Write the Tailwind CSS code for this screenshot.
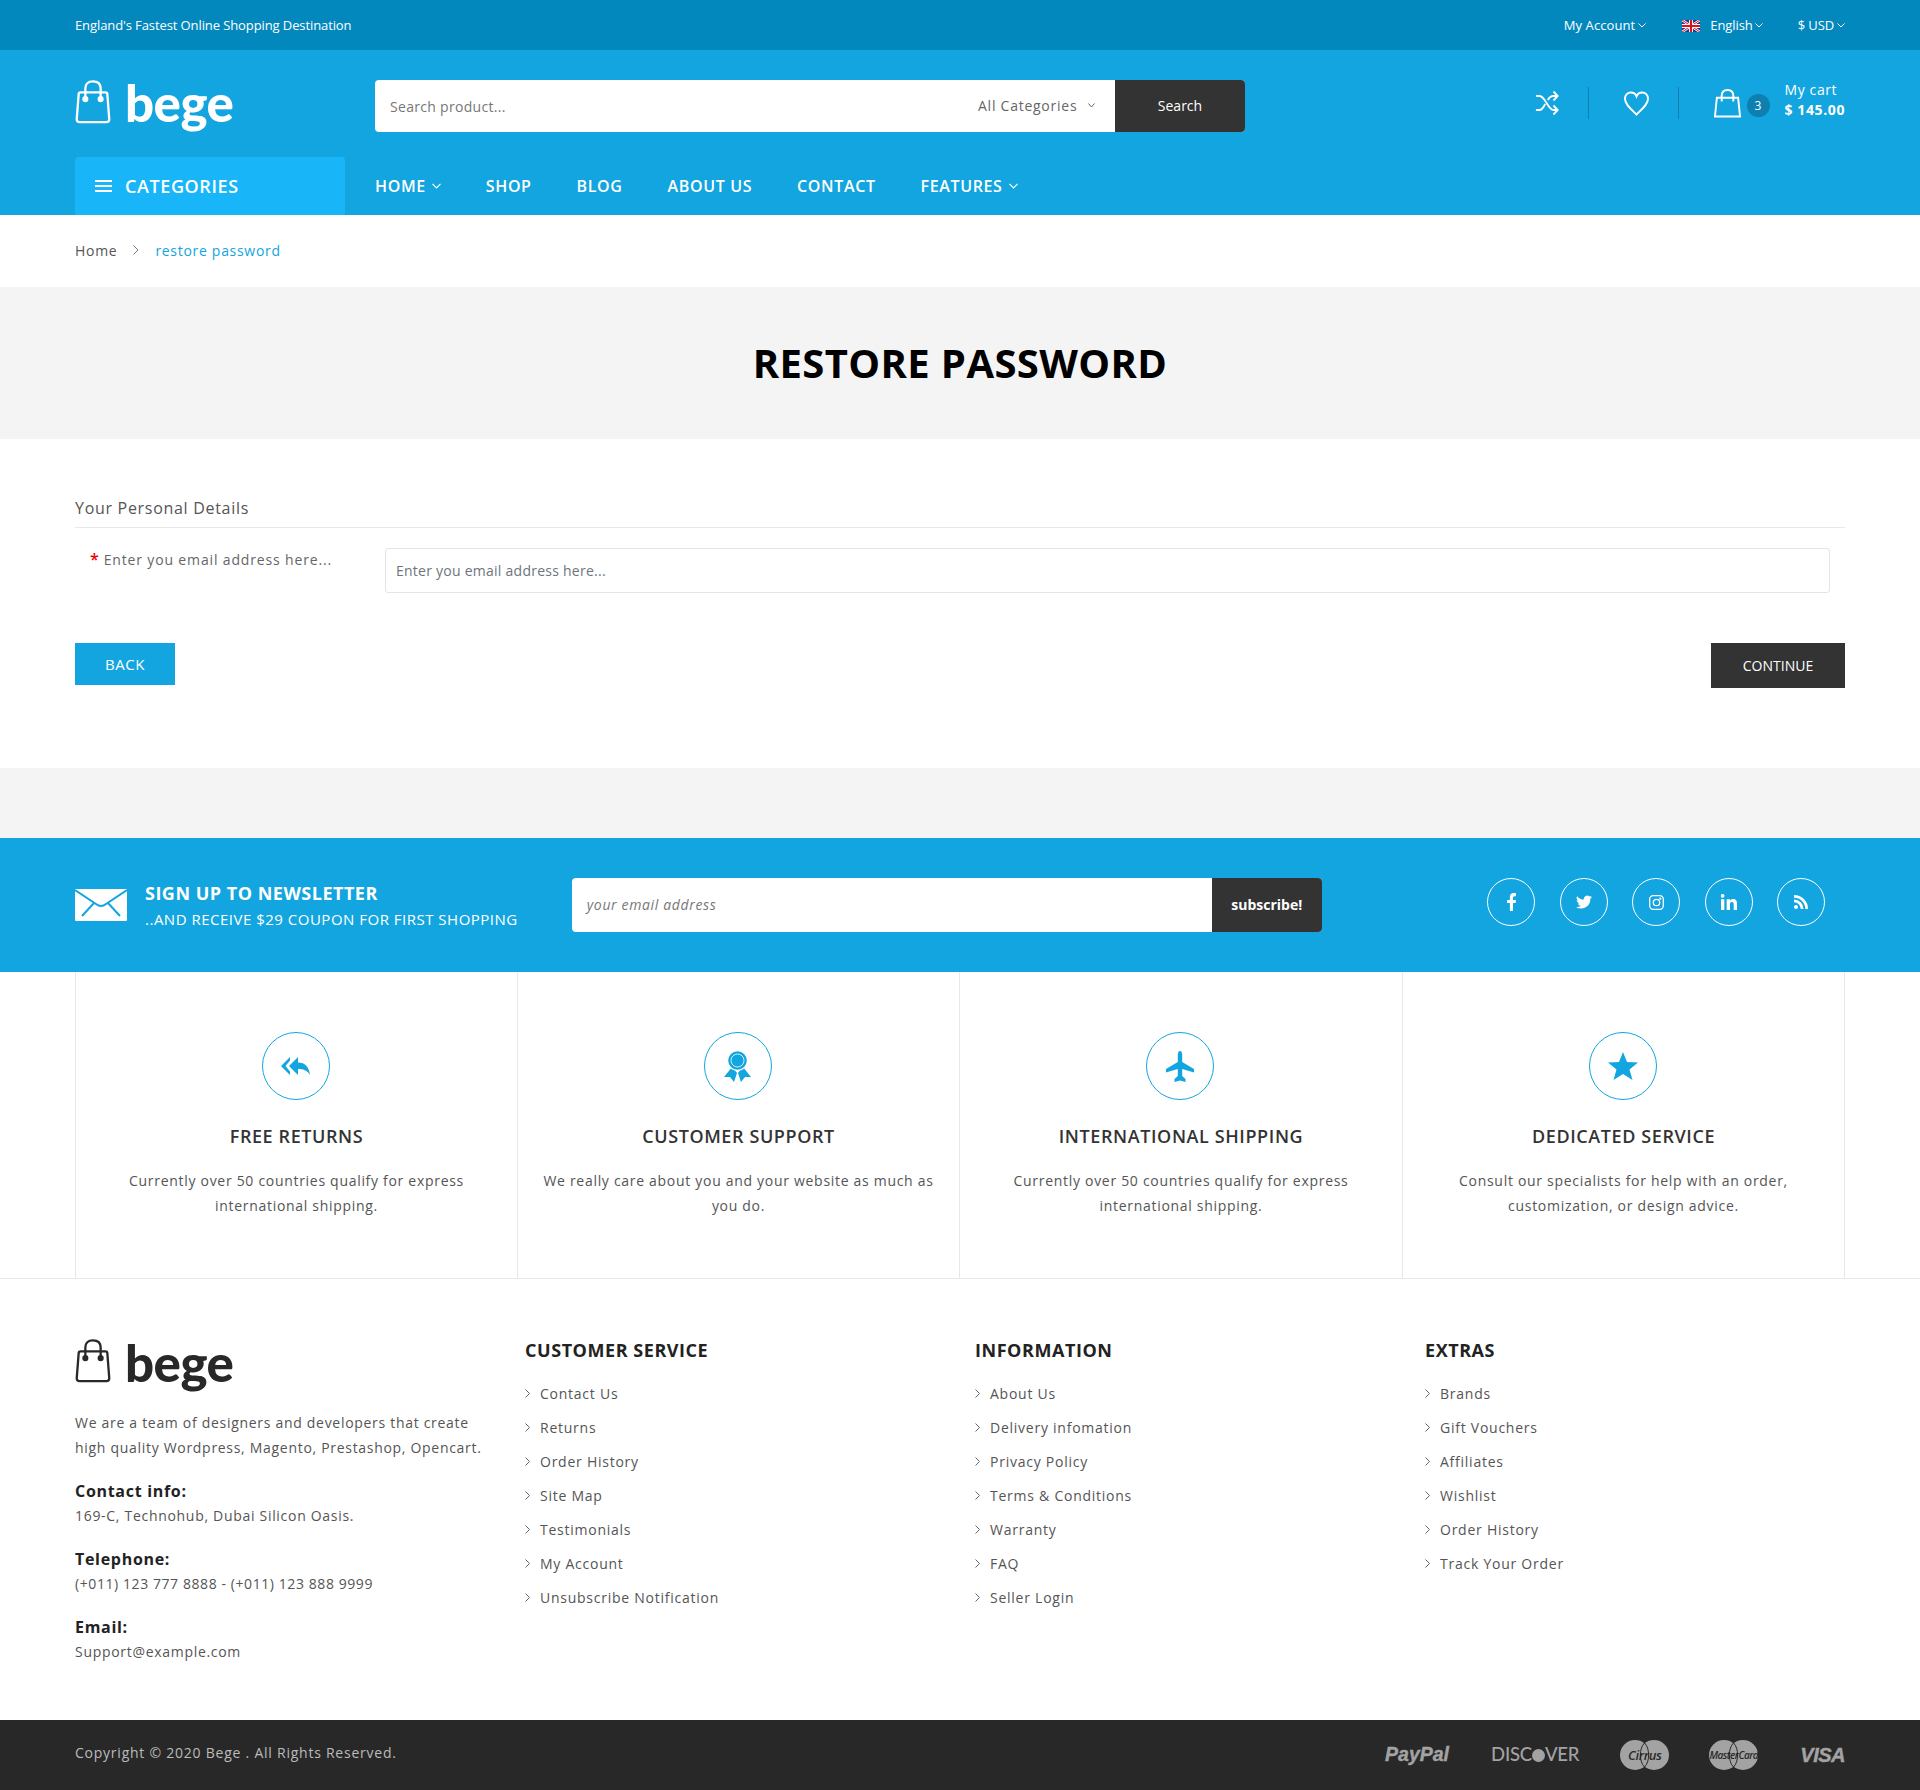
<!DOCTYPE html>
<html lang="en">
<head>
<meta charset="UTF-8">
<title>Bege - Restore Password</title>
<script src="https://cdn.jsdelivr.net/npm/@tailwindcss/browser@4"></script>
</head>
<body class="bg-white font-['Open_Sans',sans-serif] text-[14px] text-[#555]">

<!-- Top bar -->
<div class="h-[50px] bg-[#0388bd] text-white text-[13px] tracking-[-0.1px]">
  <div class="mx-[75px] h-full pt-[1px] flex justify-between items-center">
    <span>England's Fastest Online Shopping Destination</span>
    <div class="flex items-center">
      <span class="flex items-center gap-[3px] tracking-[0.1px]">My Account <svg class="w-[8px] h-[5px]" viewBox="0 0 8 5" fill="none" stroke="#fff"><path d="M.5.5 4 4 7.5.5"/></svg></span>
      <svg class="w-[18px] h-[12px] ml-[36px] mr-[10px]" viewBox="0 0 18 12"><rect width="18" height="12" fill="#1f3a8a"/><path d="M0 0 18 12M18 0 0 12" stroke="#fff" stroke-width="2.4"/><path d="M0 0 18 12M18 0 0 12" stroke="#d8121f" stroke-width="1"/><path d="M9 0V12M0 6H18" stroke="#fff" stroke-width="4"/><path d="M9 0V12M0 6H18" stroke="#d8121f" stroke-width="2.2"/></svg>
      <span class="flex items-center gap-[2px]">English <svg class="w-[8px] h-[5px]" viewBox="0 0 8 5" fill="none" stroke="#fff"><path d="M.5.5 4 4 7.5.5"/></svg></span>
      <span class="flex items-center gap-[3px] ml-[35px]">$ USD <svg class="w-[8px] h-[5px]" viewBox="0 0 8 5" fill="none" stroke="#fff"><path d="M.5.5 4 4 7.5.5"/></svg></span>
    </div>
  </div>
</div>

<!-- Header -->
<header class="h-[165px] bg-[#13a5df] text-white">
  <div class="mx-[75px] h-[107px] flex items-start">
    <div class="w-[300px] pt-[30px] flex items-start gap-[14px]">
      <svg class="w-[36px] h-[44px]" viewBox="0 0 36 46" fill="none" stroke="#fff" stroke-width="2.4"><path d="M5 13H31Q33 13 33 15L35 41Q35 44 32 44H4Q1 44 1 41L3 15Q3 13 5 13Z"/><path d="M10 19V9Q10 1.500 18 1.500T26 9V19"/><circle cx="10" cy="20" r="2" fill="#fff"/><circle cx="26" cy="20" r="2" fill="#fff"/></svg>
      <span class="font-['Lato',sans-serif] font-black text-[51px] leading-[50px] tracking-[-0.5px] mt-[-2px]">bege</span>
    </div>
    <div class="mt-[30px] w-[870px] h-[52px] flex rounded-[4px] overflow-hidden bg-white text-[#666]">
      <span class="flex-1 pl-[15px] pt-[1px] leading-[52px] tracking-[0.3px] text-[#777]">Search product...</span>
      <span class="w-[137px] flex items-center tracking-[0.75px] gap-[11px] pb-[2px]">All Categories <svg class="w-[7px] h-[5px]" viewBox="0 0 7 5" fill="none" stroke="#666"><path d="M.5.500 3.500 4 6.500.5"/></svg></span>
      <span class="w-[130px] bg-[#333] text-white text-center leading-[52px]">Search</span>
    </div>
    <div class="ml-auto mt-[29px] flex items-center h-[48px]">
      <svg class="w-[24px] h-[26px] mr-[29px]" viewBox="0 0 26 26" preserveAspectRatio="none" fill="none" stroke="#fff" stroke-width="2"><path d="M1 6H5C11 6 14 20 20 20H24M1 20H5C8 20 10 16 11 14M14 10C15 8 17 6 20 6H24M20 1.500 24.500 6 20 10.500M20 15.500 24.500 20 20 24.500"/></svg>
      <div class="w-px h-[32px] bg-[#0d7fb0]"></div>
      <svg class="ml-[34px] mr-[28px] w-[27px] h-[25px]" viewBox="0 0 27 26" fill="none" stroke="#fff" stroke-width="2"><path d="M13.500 24.500C8 19 1.500 14 1.500 8C1.500 4 4.500 1.500 7.500 1.500C10 1.500 12.500 3 13.500 5.500C14.500 3 17 1.500 19.500 1.500C22.500 1.500 25.500 4 25.500 8C25.500 14 19 19 13.500 24.500Z"/></svg>
      <div class="w-px h-[32px] bg-[#0d7fb0]"></div>
      <svg class="ml-[35px] w-[27px] h-[29px]" viewBox="0 0 28 30" fill="none" stroke="#fff" stroke-width="2"><path d="M3 9H25L27 28.500H1Z"/><path d="M8 13V7Q8 1 14 1T20 7V13"/></svg>
      <span class="ml-[6px] mt-[5px] w-[23px] h-[23px] rounded-full bg-[#0d7fb0] text-center text-[12px] leading-[23px]">3</span>
      <div class="ml-[15px] mt-[-6px] leading-[20px] tracking-[0.6px]"><div>My cart</div><div class="font-bold">$ 145.00</div></div>
    </div>
  </div>
  <div class="mx-[75px] flex h-[58px]">
    <div class="w-[270px] bg-[#18b6f9] rounded-t-[4px] flex items-center pl-[20px] gap-[13px] text-[18px] font-semibold tracking-[0.6px]">
      <svg class="w-[17px] h-[14px]" viewBox="0 0 17 14" stroke="#fff" stroke-width="2"><path d="M0 2H17M0 7H17M0 12H17"/></svg>CATEGORIES
    </div>
    <nav class="ml-[30px] flex items-center gap-[45px] text-[16px] font-semibold tracking-[0.63px]">
      <span class="flex items-center gap-[6px]">HOME <svg class="w-[9px] h-[6px]" viewBox="0 0 9 6" fill="none" stroke="#fff" stroke-width="1.200"><path d="M.5.800 4.500 4.800 8.500.8"/></svg></span>
      <span>SHOP</span><span>BLOG</span><span>ABOUT US</span><span>CONTACT</span>
      <span class="flex items-center gap-[6px]">FEATURES <svg class="w-[9px] h-[6px]" viewBox="0 0 9 6" fill="none" stroke="#fff" stroke-width="1.200"><path d="M.5.800 4.500 4.800 8.500.8"/></svg></span>
    </nav>
  </div>
</header>

<!-- Breadcrumb -->
<div class="h-[72px] mx-[75px] pb-[2px] flex items-center tracking-[0.7px]">
  <span class="text-[#555]">Home</span>
  <svg class="w-[6px] h-[10px] mx-[16px]" viewBox="0 0 6 10" fill="none" stroke="#777"><path d="M.5.500 5 5 .5 9.500"/></svg>
  <span class="text-[#13a5df]">restore password</span>
</div>

<!-- Title -->
<div class="h-[152px] bg-[#f4f4f4] pb-[1px] flex items-center justify-center">
  <h1 class="text-[40px] font-bold text-black tracking-[0.4px]">RESTORE PASSWORD</h1>
</div>

<!-- Form -->
<main class="mx-[75px] h-[329px] pt-[58px]">
  <div class="h-[31px] border-b border-[#e8e8e8] text-[16px] leading-[22px] tracking-[0.7px] text-[#555]">Your Personal Details</div>
  <div class="flex items-start mt-[20px] pr-[15px]">
    <label class="w-[310px] pl-[15px] leading-[22px] tracking-[0.85px] text-[#666]"><span class="text-[#e00] text-[16px] font-semibold mr-[4px]">*</span>Enter you email address here...</label>
    <div class="flex-1 h-[45px] border border-[#e4e4e4] rounded-[3px] pl-[10px] leading-[43px] tracking-[0.25px] text-[#6c757d]">Enter you email address here...</div>
  </div>
  <div class="flex justify-between items-start mt-[50px]">
    <span class="w-[100px] h-[42px] bg-[#13a5df] text-white text-[15px] text-center leading-[42px] tracking-[0.6px]">BACK</span>
    <span class="w-[134px] h-[45px] bg-[#333] text-white text-center leading-[45px]">CONTINUE</span>
  </div>
</main>

<div class="h-[70px] bg-[#f4f4f4]"></div>

<!-- Newsletter -->
<section class="h-[134px] bg-[#13a5df] text-white">
  <div class="mx-[75px] h-full flex items-start">
    <svg class="mt-[51px] w-[52px] h-[32px]" viewBox="0 0 52 32"><rect width="52" height="32" rx="1" fill="#fff"/><path d="M0 1 21 15Q26 19 31 15L52 1M7 27 19 14M45 27 33 14" fill="none" stroke="#13a5df" stroke-width="2"/></svg>
    <div class="ml-[18px] mt-[42px]">
      <div class="text-[18px] leading-[26px] font-bold tracking-[0.5px]">SIGN UP TO NEWSLETTER</div>
      <div class="text-[15px] leading-[26px] tracking-[0.5px]">..AND RECEIVE $29 COUPON FOR FIRST SHOPPING</div>
    </div>
    <div class="ml-[54px] mt-[40px] w-[750px] h-[54px] flex bg-white rounded-[4px] overflow-hidden">
      <span class="flex-1 pl-[15px] leading-[54px] italic text-[#777] tracking-[0.65px]">your email address</span>
      <span class="w-[110px] bg-[#333] text-center leading-[54px] font-bold text-white">subscribe!</span>
    </div>
    <div class="ml-auto mr-[20px] mt-[40px] flex gap-[24.500px]">
      <span class="w-[48px] h-[48px] rounded-full border border-white flex items-center justify-center"><svg class="w-[9px] h-[18px]" viewBox="0 0 9 18" fill="#fff"><path d="M6 18V10H8.600L9 7H6V5C6 4 6.300 3.300 7.600 3.300H9V.2C8.700.1 7.800 0 6.700 0 4.400 0 2.900 1.400 2.900 4V7H0V10H2.900V18Z"/></svg></span>
      <span class="w-[48px] h-[48px] rounded-full border border-white flex items-center justify-center"><svg class="w-[16px] h-[16px]" viewBox="0 0 24 24" fill="#fff"><path d="M24 4.600a10 10 0 0 1-2.800.8 5 5 0 0 0 2.200-2.700 10 10 0 0 1-3.100 1.200 4.900 4.900 0 0 0-8.400 4.500A14 14 0 0 1 1.700 3.200a4.900 4.900 0 0 0 1.500 6.600 5 5 0 0 1-2.200-.6 4.900 4.900 0 0 0 3.900 4.800 5 5 0 0 1-2.200.1 4.900 4.900 0 0 0 4.600 3.400A10 10 0 0 1 0 19.500a14 14 0 0 0 21.500-12.400A10 10 0 0 0 24 4.600Z"/></svg></span>
      <span class="w-[48px] h-[48px] rounded-full border border-white flex items-center justify-center"><svg class="w-[15px] h-[15px]" viewBox="0 0 15 15" fill="none" stroke="#fff" stroke-width="1.300"><rect x=".7" y=".7" width="13.600" height="13.600" rx="3.500"/><circle cx="7.500" cy="7.500" r="3.200"/><circle cx="11.300" cy="3.700" r=".5" fill="#fff"/></svg></span>
      <span class="w-[48px] h-[48px] rounded-full border border-white flex items-center justify-center"><svg class="w-[16px] h-[16px]" viewBox="0 0 24 24" fill="#fff"><path d="M0 8H5V24H0ZM2.500 0A2.800 2.800 0 1 1 2.500 5.600 2.800 2.800 0 0 1 2.500 0ZM8.500 8H13.300V10.200C14 8.900 15.600 7.600 18.100 7.600 23.100 7.600 24 10.900 24 15.200V24H19V16.200C19 14.300 19 11.900 16.400 11.900S13.500 13.900 13.500 16.100V24H8.500Z"/></svg></span>
      <span class="w-[48px] h-[48px] rounded-full border border-white flex items-center justify-center"><svg class="w-[14px] h-[14px]" viewBox="0 0 14 14" fill="#fff"><circle cx="2" cy="12" r="2"/><path d="M0 4.500V7.200A6.800 6.800 0 0 1 6.800 14H9.500A9.500 9.500 0 0 0 0 4.500ZM0 0V2.700A11.300 11.300 0 0 1 11.300 14H14A14 14 0 0 0 0 0Z"/></svg></span>
    </div>
  </div>
</section>

<!-- Services -->
<section class="border-b border-[#e8e8e8]">
  <div class="mx-[75px] grid grid-cols-[442px_442px_443px_443px] text-center">
    <div class="h-[306px] border-l border-[#e8e8e8] pt-[60px] px-[20px]">
      <span class="ml-[calc(50%-35px)] w-[68px] h-[68px] rounded-full border border-[#13a5df] flex items-center justify-center"><svg class="w-[29px] h-[18px]" viewBox="0 0 29 18" fill="#13a5df"><path d="M0 9 9 0V3.500L4.500 9 9 14.500V18Z"/><path d="M8 9 17 0V5.500C24 5.500 28 10 29 18 26 13 22 12 17 12V18Z"/></svg></span>
      <h3 class="mt-[23px] text-[18px] leading-[26px] font-[550] text-[#333] tracking-[0.6px]">FREE RETURNS</h3>
      <p class="mt-[19px] leading-[25px] tracking-[0.7px] text-[#555]">Currently over 50 countries qualify for express international shipping.</p>
    </div>
    <div class="h-[306px] border-l border-[#e8e8e8] pt-[60px] px-[20px]">
      <span class="ml-[calc(50%-35px)] w-[68px] h-[68px] rounded-full border border-[#13a5df] flex items-center justify-center"><svg class="w-[27px] h-[31px]" viewBox="0 0 27 31" fill="#13a5df"><path d="M8 16 0 26 6 26 10 31 13 22ZM19 16 27 26 21 26 17 31 14 22Z"/><circle cx="13.500" cy="9.500" r="10.500" fill="#fff"/><circle cx="13.500" cy="9.500" r="9.300"/><circle cx="13.500" cy="9.500" r="6.500" fill="none" stroke="#fff" stroke-width=".8"/></svg></span>
      <h3 class="mt-[23px] text-[18px] leading-[26px] font-[550] text-[#333] tracking-[0.6px]">CUSTOMER SUPPORT</h3>
      <p class="mt-[19px] leading-[25px] tracking-[0.7px] text-[#555]">We really care about you and your website as much as you do.</p>
    </div>
    <div class="h-[306px] border-l border-[#e8e8e8] pt-[60px] px-[20px]">
      <span class="ml-[calc(50%-35px)] w-[68px] h-[68px] rounded-full border border-[#13a5df] flex items-center justify-center"><svg class="w-[28px] h-[31px]" viewBox="0 0 28 31" fill="#13a5df"><path d="M14 0C15.500 0 16.200 2 16.200 4V11L28 18V21.500L16.200 18V25L19.500 28V31L14 29.500 8.500 31V28L11.800 25V18L0 21.500V18L11.800 11V4C11.800 2 12.500 0 14 0Z"/></svg></span>
      <h3 class="mt-[23px] text-[18px] leading-[26px] font-[550] text-[#333] tracking-[0.6px]">INTERNATIONAL SHIPPING</h3>
      <p class="mt-[19px] leading-[25px] tracking-[0.7px] text-[#555]">Currently over 50 countries qualify for express international shipping.</p>
    </div>
    <div class="h-[306px] border-x border-[#e8e8e8] pt-[60px] px-[20px]">
      <span class="ml-[calc(50%-35px)] w-[68px] h-[68px] rounded-full border border-[#13a5df] flex items-center justify-center"><svg class="w-[30px] h-[28px]" viewBox="0 0 30 28" fill="#13a5df"><path d="M15 0 19 10 30 10.500 21.500 17.500 24.500 28 15 22 5.500 28 8.500 17.500 0 10.500 11 10Z"/></svg></span>
      <h3 class="mt-[23px] text-[18px] leading-[26px] font-[550] text-[#333] tracking-[0.6px]">DEDICATED SERVICE</h3>
      <p class="mt-[19px] leading-[25px] tracking-[0.7px] text-[#555]">Consult our specialists for help with an order, customization, or design advice.</p>
    </div>
  </div>
</section>

<!-- Footer -->
<footer class="h-[441px] mx-[75px] grid grid-cols-[450px_450px_450px_1fr] pt-[58px] tracking-[0.7px] text-[#555]">
  <div class="pr-[20px]">
    <div class="flex items-start gap-[14px] mt-[4px]">
      <svg class="w-[36px] h-[44px] mt-[-2px]" viewBox="0 0 36 46" fill="none" stroke="#282828" stroke-width="2.4"><path d="M5 13H31Q33 13 33 15L35 41Q35 44 32 44H4Q1 44 1 41L3 15Q3 13 5 13Z"/><path d="M10 19V9Q10 1.500 18 1.500T26 9V19"/><circle cx="10" cy="20" r="2" fill="#282828"/><circle cx="26" cy="20" r="2" fill="#282828"/></svg>
      <span class="font-['Lato',sans-serif] font-black text-[51px] leading-[50px] tracking-[-0.5px] mt-[-3px] text-[#282828]">bege</span>
    </div>
    <p class="mt-[22px] leading-[25px] whitespace-nowrap">We are a team of designers and developers that create<br>high quality Wordpress, Magento, Prestashop, Opencart.</p>
    <h5 class="mt-[20px] text-[16px] leading-[23px] font-bold text-[#222]">Contact info:</h5>
    <p class="leading-[25px]">169-C, Technohub, Dubai Silicon Oasis.</p>
    <h5 class="mt-[20px] text-[16px] leading-[23px] font-bold text-[#222]">Telephone:</h5>
    <p class="leading-[25px] tracking-[0.58px]">(+011) 123 777 8888 - (+011) 123 888 9999</p>
    <h5 class="mt-[20px] text-[16px] leading-[23px] font-bold text-[#222]">Email:</h5>
    <p class="leading-[25px]">Support@example.com</p>
  </div>
  <div>
    <h4 class="text-[18px] leading-[26px] font-bold text-[#222] tracking-[0.55px] mb-[13px]">CUSTOMER SERVICE</h4>
    <ul class="text-[14px] tracking-[0.75px]">
      <li class="h-[34px] flex items-center gap-[10px]"><svg class="w-[5px] h-[9px]" viewBox="0 0 5 9" fill="none" stroke="#666"><path d="M.5.500 4.500 4.500 .5 8.500"/></svg>Contact Us</li>
      <li class="h-[34px] flex items-center gap-[10px]"><svg class="w-[5px] h-[9px]" viewBox="0 0 5 9" fill="none" stroke="#666"><path d="M.5.500 4.500 4.500 .5 8.500"/></svg>Returns</li>
      <li class="h-[34px] flex items-center gap-[10px]"><svg class="w-[5px] h-[9px]" viewBox="0 0 5 9" fill="none" stroke="#666"><path d="M.5.500 4.500 4.500 .5 8.500"/></svg>Order History</li>
      <li class="h-[34px] flex items-center gap-[10px]"><svg class="w-[5px] h-[9px]" viewBox="0 0 5 9" fill="none" stroke="#666"><path d="M.5.500 4.500 4.500 .5 8.500"/></svg>Site Map</li>
      <li class="h-[34px] flex items-center gap-[10px]"><svg class="w-[5px] h-[9px]" viewBox="0 0 5 9" fill="none" stroke="#666"><path d="M.5.500 4.500 4.500 .5 8.500"/></svg>Testimonials</li>
      <li class="h-[34px] flex items-center gap-[10px]"><svg class="w-[5px] h-[9px]" viewBox="0 0 5 9" fill="none" stroke="#666"><path d="M.5.500 4.500 4.500 .5 8.500"/></svg>My Account</li>
      <li class="h-[34px] flex items-center gap-[10px]"><svg class="w-[5px] h-[9px]" viewBox="0 0 5 9" fill="none" stroke="#666"><path d="M.5.500 4.500 4.500 .5 8.500"/></svg>Unsubscribe Notification</li>
    </ul>
  </div>
  <div>
    <h4 class="text-[18px] leading-[26px] font-bold text-[#222] tracking-[0.55px] mb-[13px]">INFORMATION</h4>
    <ul class="text-[14px] tracking-[0.75px]">
      <li class="h-[34px] flex items-center gap-[10px]"><svg class="w-[5px] h-[9px]" viewBox="0 0 5 9" fill="none" stroke="#666"><path d="M.5.500 4.500 4.500 .5 8.500"/></svg>About Us</li>
      <li class="h-[34px] flex items-center gap-[10px]"><svg class="w-[5px] h-[9px]" viewBox="0 0 5 9" fill="none" stroke="#666"><path d="M.5.500 4.500 4.500 .5 8.500"/></svg>Delivery infomation</li>
      <li class="h-[34px] flex items-center gap-[10px]"><svg class="w-[5px] h-[9px]" viewBox="0 0 5 9" fill="none" stroke="#666"><path d="M.5.500 4.500 4.500 .5 8.500"/></svg>Privacy Policy</li>
      <li class="h-[34px] flex items-center gap-[10px]"><svg class="w-[5px] h-[9px]" viewBox="0 0 5 9" fill="none" stroke="#666"><path d="M.5.500 4.500 4.500 .5 8.500"/></svg>Terms &amp; Conditions</li>
      <li class="h-[34px] flex items-center gap-[10px]"><svg class="w-[5px] h-[9px]" viewBox="0 0 5 9" fill="none" stroke="#666"><path d="M.5.500 4.500 4.500 .5 8.500"/></svg>Warranty</li>
      <li class="h-[34px] flex items-center gap-[10px]"><svg class="w-[5px] h-[9px]" viewBox="0 0 5 9" fill="none" stroke="#666"><path d="M.5.500 4.500 4.500 .5 8.500"/></svg>FAQ</li>
      <li class="h-[34px] flex items-center gap-[10px]"><svg class="w-[5px] h-[9px]" viewBox="0 0 5 9" fill="none" stroke="#666"><path d="M.5.500 4.500 4.500 .5 8.500"/></svg>Seller Login</li>
    </ul>
  </div>
  <div>
    <h4 class="text-[18px] leading-[26px] font-bold text-[#222] tracking-[0.55px] mb-[13px]">EXTRAS</h4>
    <ul class="text-[14px] tracking-[0.75px]">
      <li class="h-[34px] flex items-center gap-[10px]"><svg class="w-[5px] h-[9px]" viewBox="0 0 5 9" fill="none" stroke="#666"><path d="M.5.500 4.500 4.500 .5 8.500"/></svg>Brands</li>
      <li class="h-[34px] flex items-center gap-[10px]"><svg class="w-[5px] h-[9px]" viewBox="0 0 5 9" fill="none" stroke="#666"><path d="M.5.500 4.500 4.500 .5 8.500"/></svg>Gift Vouchers</li>
      <li class="h-[34px] flex items-center gap-[10px]"><svg class="w-[5px] h-[9px]" viewBox="0 0 5 9" fill="none" stroke="#666"><path d="M.5.500 4.500 4.500 .5 8.500"/></svg>Affiliates</li>
      <li class="h-[34px] flex items-center gap-[10px]"><svg class="w-[5px] h-[9px]" viewBox="0 0 5 9" fill="none" stroke="#666"><path d="M.5.500 4.500 4.500 .5 8.500"/></svg>Wishlist</li>
      <li class="h-[34px] flex items-center gap-[10px]"><svg class="w-[5px] h-[9px]" viewBox="0 0 5 9" fill="none" stroke="#666"><path d="M.5.500 4.500 4.500 .5 8.500"/></svg>Order History</li>
      <li class="h-[34px] flex items-center gap-[10px]"><svg class="w-[5px] h-[9px]" viewBox="0 0 5 9" fill="none" stroke="#666"><path d="M.5.500 4.500 4.500 .5 8.500"/></svg>Track Your Order</li>
    </ul>
  </div>
</footer>

<!-- Bottom bar -->
<div class="h-[70px] bg-[#282828]">
  <div class="mx-[75px] h-full flex items-center justify-between">
    <span class="text-[#bbb] tracking-[0.76px] mb-[5px]">Copyright © 2020 Bege . All Rights Reserved.</span>
    <div class="flex items-center text-[#a3a3a3] mb-[1px]">
      <span class="font-['Liberation_Sans',sans-serif] italic font-bold text-[19.500px] [-webkit-text-stroke:0.4px_#a3a3a3]">PayPal</span>
      <span class="ml-[42px] font-['Lato',sans-serif] font-medium text-[18.500px] tracking-[-0.2px]">DISC<span class="inline-block w-[13px] h-[13px] rounded-full bg-[#a3a3a3] align-[-1px]"></span>VER</span>
      <span class="ml-[41px] relative w-[49px] h-[30px] block">
        <svg class="w-[49px] h-[30px]" viewBox="0 0 49 30"><circle cx="15" cy="15" r="15" fill="#a3a3a3"/><circle cx="34" cy="15" r="15" fill="#a3a3a3"/><path d="M24.500 3C19 8 19 22 24.500 27M24.500 3C30 8 30 22 24.500 27" fill="none" stroke="#282828"/></svg>
        <span class="absolute inset-0 text-center leading-[30px] text-[13px] italic font-semibold text-[#282828] tracking-[-0.3px]">Cirrus</span>
      </span>
      <span class="ml-[40px] relative w-[49px] h-[30px] block">
        <svg class="w-[49px] h-[30px]" viewBox="0 0 49 30"><circle cx="15" cy="15" r="15" fill="#a3a3a3"/><circle cx="34" cy="15" r="15" fill="#a3a3a3"/><path d="M24.500 3C19 8 19 22 24.500 27M24.500 3C30 8 30 22 24.500 27" fill="none" stroke="#282828"/></svg>
        <span class="absolute inset-0 text-center leading-[30px] text-[10px] italic font-semibold text-[#282828] tracking-[-0.5px]">MasterCard</span>
      </span>
      <span class="ml-[42px] font-['Liberation_Sans',sans-serif] italic font-bold text-[20px] tracking-[-0.5px] [-webkit-text-stroke:0.4px_#a3a3a3]">VISA</span>
    </div>
  </div>
</div>
</body>
</html>
